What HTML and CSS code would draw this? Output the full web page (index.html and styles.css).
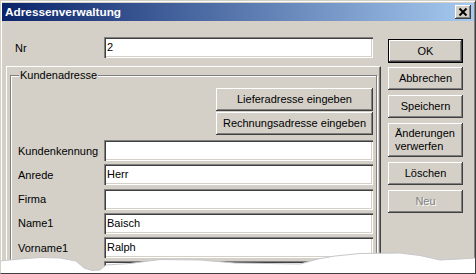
FILE: index.html
```html
<!DOCTYPE html>
<html>
<head>
<meta charset="utf-8">
<link rel="stylesheet" href="styles.css">
</head>
<body>
<div class="window">
  <div class="titlebar">
    <span class="title">Adressenverwaltung</span>
    <span class="close"><svg width="16" height="14" viewBox="0 0 16 14"><path d="M4.5 3.5 L11.5 10.5 M11.5 3.5 L4.5 10.5" stroke="#000" stroke-width="1.9" fill="none"/></svg></span>
  </div>
  <div class="main">
    <div class="left">
      <div class="row nr"><span class="lbl nrlbl">Nr</span><div class="field">2</div></div>
      <div class="panel">
        <fieldset class="group">
          <legend>Kundenadresse</legend>
          <div class="actions">
            <button class="btn wide">Lieferadresse eingeben</button>
            <button class="btn wide">Rechnungsadresse eingeben</button>
          </div>
          <div class="rows">
            <div class="row"><span class="lbl">Kundenkennung</span><div class="field"></div></div>
            <div class="row"><span class="lbl">Anrede</span><div class="field">Herr</div></div>
            <div class="row"><span class="lbl">Firma</span><div class="field"></div></div>
            <div class="row"><span class="lbl">Name1</span><div class="field">Baisch</div></div>
            <div class="row"><span class="lbl">Vorname1</span><div class="field">Ralph</div></div>
            <div class="row"><span class="lbl"></span><div class="field"></div></div>
          </div>
        </fieldset>
      </div>
    </div>
    <div class="right">
      <button class="btn side default">OK</button>
      <button class="btn side">Abbrechen</button>
      <button class="btn side">Speichern</button>
      <button class="btn side tall">Änderungen<br>verwerfen</button>
      <button class="btn side">Löschen</button>
      <button class="btn side disabled">Neu</button>
    </div>
  </div>
  <svg class="tear" width="476" height="30" viewBox="0 244 476 30">
    <path d="M0 261 L20 259 L40 257.5 L60 258 L76 261 L84 268 L92 270.5 L100 270 L106 265 L130 263.5 L160 259.5 L200 260 L235 263 L300 264 L318 259 L335 256 L360 253.5 L400 253 L420 255.5 L440 260 L460 259 L476 258 L476 274 L0 274 Z" fill="#ffffff"/>
    <path d="M0 261 L20 259 L40 257.5 L60 258 L76 261 L84 268 L92 270.5 L100 270 L106 265 L130 263.5 L160 259.5 L200 260 L235 263 L300 264 L318 259 L335 256 L360 253.5 L400 253 L420 255.5 L440 260 L460 259 L476 258" fill="none" stroke="#c8c8cc" stroke-width="1"/>
  </svg>
</div>
</body>
</html>
```
FILE: styles.css
```css
html, body {
  margin: 0;
  padding: 0;
  background: #ffffff;
}
body {
  width: 476px;
  height: 274px;
  overflow: hidden;
  font-family: "Liberation Sans", Arial, sans-serif;
  font-size: 11px;
  color: #000;
}
.window {
  position: relative;
  width: 476px;
  height: 274px;
  box-sizing: border-box;
  background: #d4d0c8;
  border: 1px solid;
  border-color: #d4d0c8 #404040 #404040 #d4d0c8;
  box-shadow: inset 1px 1px #ffffff, inset -1px -1px #808080;
  padding: 2px 1px 0 1px;
  overflow: hidden;
}
.titlebar {
  height: 18px;
  display: flex;
  align-items: center;
  justify-content: space-between;
  background: linear-gradient(to right, #0a246a, #a6caf0);
  padding: 0 3px 0 3px;
}
.title {
  color: #fff;
  font-weight: bold;
  font-size: 11.8px;
  line-height: 14px;
}
.close {
  width: 16px;
  height: 14px;
  background: #d4d0c8;
  box-shadow: inset -1px -1px #404040, inset 1px 1px #ffffff, inset -2px -2px #808080;
  display: flex;
}
.main {
  display: flex;
  align-items: flex-start;
}
.left {
  width: 380px;
  display: flex;
  flex-direction: column;
}
.row {
  height: 21px;
  display: flex;
  align-items: center;
}
.nr {
  margin-top: 16px;
  padding-left: 13px;
}
.lbl {
  width: 86px;
  white-space: nowrap;
}
.nrlbl {
  width: 89px;
}
.field {
  width: 269px;
  height: 21px;
  box-sizing: border-box;
  background: #fff;
  box-shadow: inset 1px 1px #808080, inset 2px 2px #404040, inset -1px -1px #ffffff, inset -2px -2px #d4d0c8;
  padding: 0 3px;
  line-height: 21px;
}
.panel {
  margin-top: 8px;
  margin-left: 4px;
  width: 375px;
  height: 220px;
  box-sizing: border-box;
  border-top: 1px solid #ffffff;
  border-left: 1px solid #ffffff;
  border-right: 1px solid #404040;
  box-shadow: inset -1px 0 #808080;
  padding: 2px 0 0 3px;
}
.group {
  margin: 0;
  width: 367px;
  box-sizing: border-box;
  border: 1px solid #808080;
  box-shadow: inset 1px 1px #ffffff, 1px 1px #ffffff;
  padding: 6px 3px 0 7px;
  min-inline-size: 0;
}
.group legend {
  margin-left: 1px;
  padding: 0 1px;
  line-height: 13px;
  font-size: 11px;
  background: #d4d0c8;
}
.actions {
  display: flex;
  flex-direction: column;
  align-items: flex-end;
  gap: 1px;
}
.rows {
  margin-top: 5px;
  display: flex;
  flex-direction: column;
  gap: 3.3px;
}
.btn {
  font-family: "Liberation Sans", Arial, sans-serif;
  font-size: 11px;
  color: #000;
  background: #d4d0c8;
  border: none;
  margin: 0;
  padding: 0;
  height: 23px;
  box-sizing: border-box;
  box-shadow: inset -1px -1px #404040, inset 1px 1px #ffffff, inset -2px -2px #808080;
  line-height: 13px;
}
.wide {
  width: 157px;
}
.right {
  margin-left: 6px;
  margin-top: 18px;
  width: 75px;
  display: flex;
  flex-direction: column;
  gap: 5px;
}
.side {
  width: 75px;
}
.default {
  height: 24px;
  margin-bottom: -1px;
  border: 1px solid #000;
}
.tall {
  height: 34px;
  text-align: left;
  padding-left: 7px;
}
.disabled {
  color: #808080;
  text-shadow: 1px 1px #ffffff;
}
.tear {
  position: absolute;
  left: -1px;
  bottom: -1px;
}
```
